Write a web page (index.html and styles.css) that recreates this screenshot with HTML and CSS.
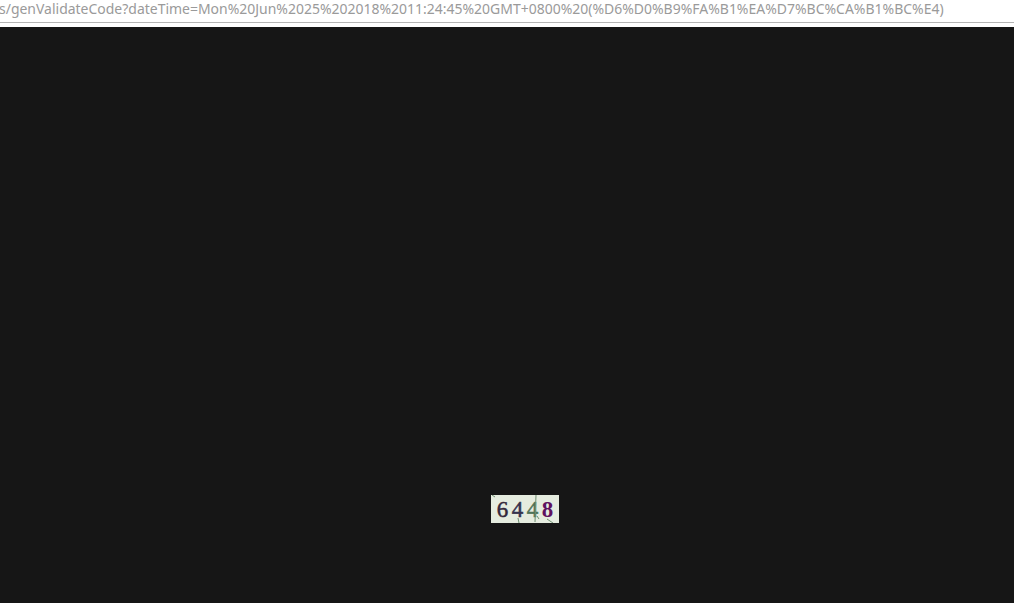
FILE: index.html
```html
<!DOCTYPE html>
<html lang="en">
<head>
<meta charset="utf-8">
<title>genValidateCode</title>
<link rel="stylesheet" href="styles.css">
</head>
<body>
<header class="address-bar"><span class="url">s/genValidateCode?dateTime=Mon%20Jun%2025%202018%2011:24:45%20GMT+0800%20(%D6%D0%B9%FA%B1%EA%D7%BC%CA%B1%BC%E4)</span></header>
<main class="viewer">
  <div class="captcha">
    <span class="digit d1">6</span><span class="digit d2">4</span><span class="digit d3">4</span><span class="digit d4">8</span>
    <svg class="noise" viewBox="0 0 68 28" width="68" height="28" aria-hidden="true">
      <path d="M27 23l1 5M45 0l-1 27M56 24l6 4M1 0l3 2M46 21l2 3" stroke="#6f8f72" stroke-width="1" fill="none"/>
    </svg>
  </div>
</main>
</body>
</html>
```
FILE: styles.css
```css
* { box-sizing: border-box; }
html, body { margin: 0; height: 100%; }
body { display: flex; flex-direction: column; width: 1014px; height: 603px; overflow: hidden; background: #161616; }
.address-bar { flex: none; height: 27px; background: #fff; overflow: hidden; white-space: nowrap; position: relative; }
.address-bar::after { content: ""; position: absolute; left: 0; right: 0; top: 22px; height: 1px; background: #b4b4b4; }
.url { display: block; margin-left: -1px; font: 13.97px/18px "Noto Sans", sans-serif; color: #9a9a9a; }
.viewer { flex: 1; background: #161616; padding: 468px 0 0 491px; }
.captcha { position: relative; width: 68px; height: 28px; background: #e5ecdf; display: flex; padding-left: 4px; font: 23px/29px "Liberation Serif", serif; }
.noise { position: absolute; left: 0; top: 0; }
.digit { width: 15px; text-align: center; -webkit-text-stroke: 0.5px currentColor; }
.d1 { color: #33283a; }
.d2 { color: #35324d; }
.d3 { color: #4f7358; }
.d4 { color: #5e1260; font-weight: bold; -webkit-text-stroke: 0; }
```
